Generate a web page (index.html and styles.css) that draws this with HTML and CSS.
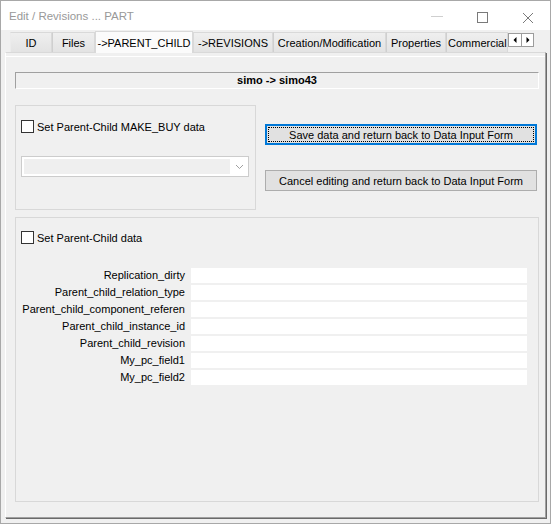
FILE: index.html
```html
<!DOCTYPE html>
<html lang="en">
<head>
<meta charset="utf-8">
<title>Edit / Revisions ... PART</title>
<link rel="stylesheet" href="styles.css">
</head>
<body>
<div class="window">
  <div class="titlebar">
    <span class="title">Edit / Revisions ... PART</span>
    <svg class="caption" width="138" height="29" viewBox="0 0 138 29">
      <line x1="19" y1="15.5" x2="31" y2="15.5" stroke="#cfcfcf" stroke-width="1"/>
      <rect x="65.5" y="11.5" width="10" height="10" fill="none" stroke="#7a7a7a" stroke-width="1"/>
      <line x1="111" y1="12" x2="121" y2="22" stroke="#7a7a7a" stroke-width="1"/>
      <line x1="121" y1="12" x2="111" y2="22" stroke="#7a7a7a" stroke-width="1"/>
    </svg>
  </div>

  <div class="tabstrip">
    <div class="tab w-id">ID</div>
    <div class="tab w-files">Files</div>
    <div class="tab active w-pc">-&gt;PARENT_CHILD</div>
    <div class="tab w-rev">-&gt;REVISIONS</div>
    <div class="tab w-cm">Creation/Modification</div>
    <div class="tab w-prop">Properties</div>
    <div class="tab w-com">Commercial</div>
    <div class="tab-scroll">
      <span class="scroll-btn">
        <svg width="11" height="12" viewBox="0 0 11 12"><polygon points="3.5,6 6.5,3 6.5,9" fill="#000"/></svg>
      </span>
      <span class="scroll-btn">
        <svg width="11" height="12" viewBox="0 0 11 12"><polygon points="7.5,6 4.5,3 4.5,9" fill="#000"/></svg>
      </span>
    </div>
  </div>

  <div class="page">
    <div class="header-field">simo -&gt; simo43</div>

    <div class="top-row">
      <div class="group group-makebuy">
        <label class="check"><span class="box"></span>Set Parent-Child MAKE_BUY data</label>
        <div class="combo">
          <span class="combo-field"></span>
          <span class="combo-arrow">
            <svg width="9" height="6" viewBox="0 0 9 6"><polyline points="1,1 4.5,4.5 8,1" fill="none" stroke="#a0a0a0" stroke-width="1"/></svg>
          </span>
        </div>
      </div>

      <div class="actions">
        <button class="btn btn-default"><span class="focus">Save data and return back to Data Input Form</span></button>
        <button class="btn">Cancel editing and return back to Data Input Form</button>
      </div>
    </div>

    <div class="group group-data">
      <label class="check"><span class="box"></span>Set Parent-Child data</label>
      <div class="fields">
        <span class="field-label">Replication_dirty</span><span class="field-input"></span>
        <span class="field-label">Parent_child_relation_type</span><span class="field-input"></span>
        <span class="field-label">Parent_child_component_referen</span><span class="field-input"></span>
        <span class="field-label">Parent_child_instance_id</span><span class="field-input"></span>
        <span class="field-label">Parent_child_revision</span><span class="field-input"></span>
        <span class="field-label">My_pc_field1</span><span class="field-input"></span>
        <span class="field-label">My_pc_field2</span><span class="field-input"></span>
      </div>
    </div>
  </div>
</div>
</body>
</html>
```

FILE: styles.css
```css
* {
  box-sizing: border-box;
}

html,
body {
  margin: 0;
  padding: 0;
  background: #ffffff;
}

body {
  font-family: "Liberation Sans", Arial, sans-serif;
  font-size: 11px;
  color: #000;
}

/* Outer window frame */
.window {
  width: 551px;
  height: 524px;
  border: 1px solid #a8a8a8;
  background: #f0f0f0;
  display: flex;
  flex-direction: column;
}

/* Title bar */
.titlebar {
  flex: none;
  height: 29px;
  background: #ffffff;
  display: flex;
  align-items: center;
  justify-content: space-between;
}

.title {
  padding-left: 8px;
  padding-top: 1px;
  font-size: 11.5px;
  color: #999999;
}

.caption {
  display: block;
}

/* Tab strip */
.tabstrip {
  flex: none;
  height: 22px;
  display: flex;
  align-items: flex-end;
  padding-left: 9px;
}

.tab {
  flex: none;
  height: 20px;
  display: flex;
  align-items: center;
  justify-content: center;
  white-space: nowrap;
  overflow: hidden;
  border: 1px solid #d9d9d9;
  border-bottom: none;
  border-left-color: #ececec;
  background: linear-gradient(#efefef, #e3e3e3);
  color: #000;
  padding-top: 1px;
}

.tab + .tab {
  border-left-color: #cfcfcf;
}

.tab.active {
  position: relative;
  z-index: 1;
  height: 22px;
  margin-bottom: -1px;
  background: #fbfbfb;
  border-color: #d9d9d9;
}

.tab.active + .tab {
  border-left-color: #d9d9d9;
}

.w-id { width: 42px; }
.w-files { width: 43px; }
.w-pc { width: 98px; }
.w-rev { width: 80px; }
.w-cm { width: 113px; }
.w-prop { width: 60px; }
.w-com { width: 62px; justify-content: flex-start; padding-left: 1px; }

.tab-scroll {
  flex: none;
  align-self: flex-start;
  margin-top: 3px;
  display: flex;
  border: 1px solid #9c9c9c;
  background: #ffffff;
}

.scroll-btn {
  width: 12px;
  height: 12px;
  display: flex;
  align-items: center;
  justify-content: center;
}

.scroll-btn + .scroll-btn {
  border-left: 1px solid #9c9c9c;
}

.scroll-btn svg {
  display: block;
}

/* Tab page */
.page {
  flex: 1;
  margin: 0 4px 5px 4px;
  border-top: 1px solid #d9d9d9;
  border-left: 1px solid #ffffff;
  border-right: 1px solid #a0a0a0;
  border-bottom: 1px solid #a0a0a0;
  box-shadow: 1px 1px 0 #6a6a6a, inset 0 3px 0 #f0f0f0, inset 0 4px 0 #ffffff;
  padding: 19px 6px 0 9px;
  display: flex;
  flex-direction: column;
}

.header-field {
  height: 17px;
  border-top: 1px solid #a0a0a0;
  border-left: 1px solid #a0a0a0;
  border-bottom: 1px solid #ffffff;
  border-right: 1px solid #ffffff;
  text-align: center;
  font-weight: bold;
  line-height: 15px;
}

.top-row {
  margin-top: 16px;
  height: 105px;
  display: flex;
  gap: 9px;
}

.group {
  border: 1px solid #d8d8d8;
}

.group-makebuy {
  width: 241px;
  padding: 14px 5px 0 5px;
}

.check {
  display: flex;
  align-items: center;
  gap: 3px;
  height: 13px;
  white-space: nowrap;
}

.box {
  flex: none;
  width: 13px;
  height: 13px;
  border: 1px solid #333333;
  background: #ffffff;
}

.combo {
  margin-top: 23px;
  width: 228px;
  height: 21px;
  border: 1px solid #cccccc;
  background: #ffffff;
  padding: 2px;
  display: flex;
}

.combo-field {
  width: 206px;
  background: #efefef;
}

.combo-arrow {
  flex: 1;
  display: flex;
  align-items: center;
  justify-content: center;
  padding-left: 2px;
}

.combo-arrow svg {
  display: block;
}

.actions {
  width: 272px;
  padding-top: 19px;
  display: flex;
  flex-direction: column;
  gap: 25px;
}

.btn {
  height: 21px;
  width: 272px;
  margin: 0;
  padding: 0;
  border: 1px solid #adadad;
  background: #e1e1e1;
  font-family: "Liberation Sans", Arial, sans-serif;
  font-size: 11px;
  color: #000;
  display: flex;
  align-items: center;
  justify-content: center;
}

.btn-default {
  border: 2px solid #0078d7;
  padding: 1px;
}

.btn-default .focus {
  flex: 1;
  align-self: stretch;
  display: flex;
  align-items: center;
  justify-content: center;
  border: 1px dotted #000;
}

.group-data {
  margin-top: 7px;
  height: 285px;
  padding: 13px 10px 0 5px;
}

.fields {
  margin-top: 24px;
  display: grid;
  grid-template-columns: 164px 336px;
  column-gap: 6px;
  row-gap: 2px;
  grid-auto-rows: 15px;
}

.field-label {
  text-align: right;
  white-space: nowrap;
  line-height: 15px;
}

.field-input {
  background: #ffffff;
}
```
